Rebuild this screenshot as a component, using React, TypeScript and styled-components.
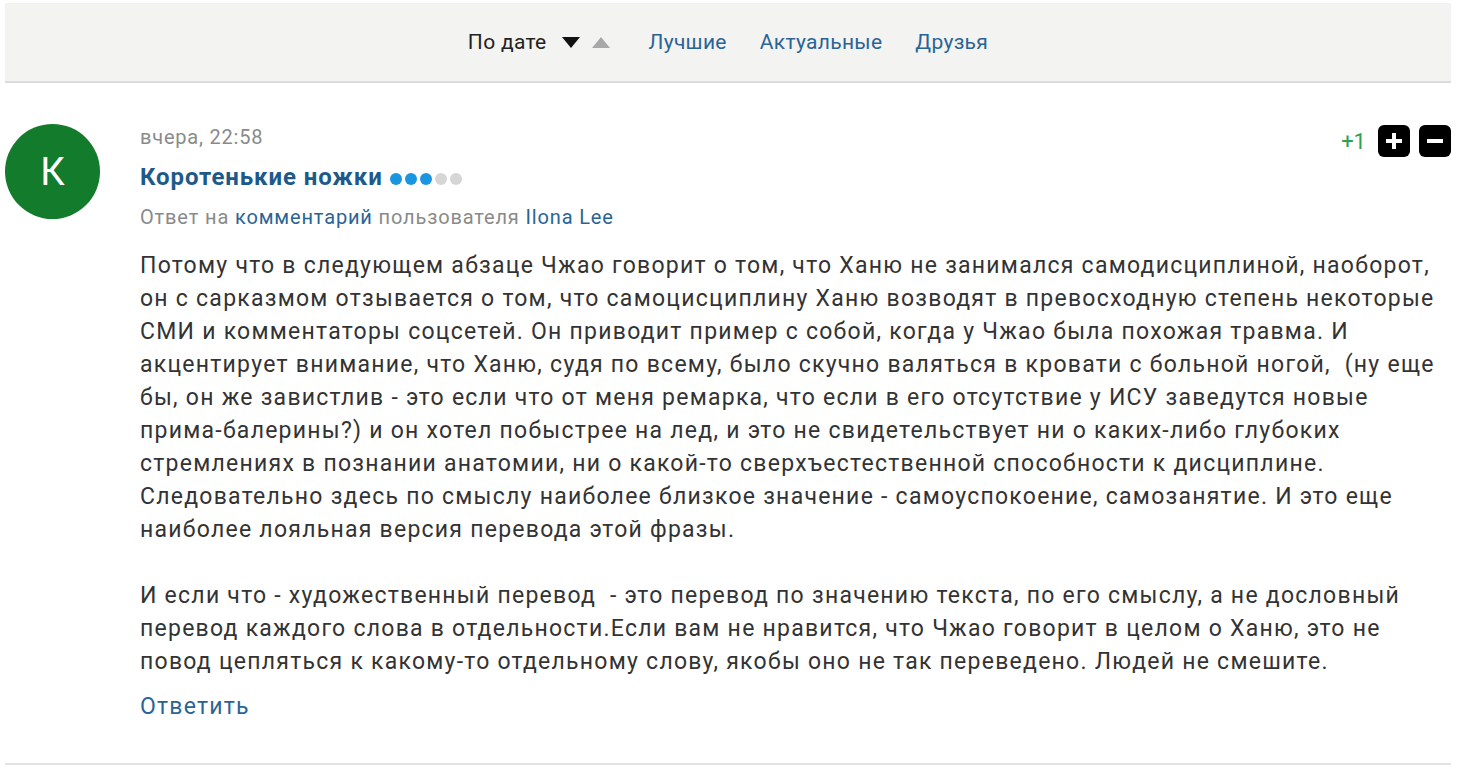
import React from "react";
import styled, { createGlobalStyle } from "styled-components";

const Global = createGlobalStyle`
  html, body { margin: 0; padding: 0; background: #fff; }
  body { font-family: Roboto, "Noto Sans", sans-serif; color: #333; }
`;

const Page = styled.div`
  width: 1446px;
  margin-left: 5px;
  padding-top: 3px;
`;

const SortBar = styled.div`
  height: 78px;
  background: #f3f3f1;
  border-bottom: 2px solid #dcdcdc;
  display: flex;
  align-items: center;
  justify-content: center;
  gap: 33px;
  font-size: 21px;
  letter-spacing: 0.3px;
`;

const SortActive = styled.span`
  color: #222;
  display: flex;
  align-items: center;
  gap: 16px;
  margin-right: 5px;
`;

const Arrows = styled.span`
  display: flex;
  gap: 12px;
  align-items: center;
`;

const Tri = styled.span<{ $up?: boolean }>`
  width: 0;
  height: 0;
  border-left: 9px solid transparent;
  border-right: 9px solid transparent;
  ${(p) =>
    p.$up
      ? "border-bottom: 11px solid #a8a8a8;"
      : "border-top: 11px solid #111;"}
`;

const SortLink = styled.a`
  color: #2a6496;
  text-decoration: none;
`;

const Comment = styled.div`
  display: flex;
  gap: 40px;
  padding-top: 41px;
  padding-bottom: 40px;
  border-bottom: 2px solid #e2e2e2;
`;

const Avatar = styled.div`
  width: 95px;
  height: 95px;
  flex: none;
  border-radius: 50%;
  background: #137b2c;
  color: #fff;
  display: flex;
  align-items: center;
  justify-content: center;
  font-size: 38px;
`;

const Main = styled.div`
  flex: 1;
  display: flex;
  flex-direction: column;
`;

const TopRow = styled.div`
  display: flex;
  justify-content: space-between;
  align-items: flex-start;
`;

const Date = styled.div`
  color: #8a8a8a;
  font-size: 20px;
  letter-spacing: 0.8px;
  line-height: 24px;
  margin-top: 1px;
`;

const Name = styled.div`
  display: flex;
  align-items: center;
  gap: 7px;
  margin-top: 14px;
  font-size: 24px;
  letter-spacing: 0.9px;
  line-height: 28px;
  font-weight: 700;
  color: #1d5a8a;
`;

const Dots = styled.span`
  display: flex;
  gap: 3px;
  margin-top: 3px;
`;

const Dot = styled.span<{ $on?: boolean }>`
  width: 12px;
  height: 12px;
  border-radius: 50%;
  background: ${(p) => (p.$on ? "#1a96e0" : "#d6d6d6")};
`;

const ReplyTo = styled.div`
  margin-top: 14px;
  font-size: 20px;
  letter-spacing: 0.85px;
  line-height: 24px;
  color: #8a8a8a;
`;

const UserLink = styled.a`
  color: #2a6496;
  text-decoration: none;
`;

const Votes = styled.div`
  display: flex;
  align-items: center;
  gap: 9px;
  margin-top: 1px;
`;

const Score = styled.span`
  color: #2aa34a;
  font-size: 22px;
  margin-right: 3px;
`;

const VoteBtn = styled.button`
  width: 32px;
  height: 32px;
  padding: 0;
  border: none;
  border-radius: 6px;
  background: #000;
  display: flex;
  align-items: center;
  justify-content: center;
`;

const Body = styled.div`
  margin-top: 20px;
  font-size: 23px;
  letter-spacing: 1.25px;
  line-height: 33px;
  color: #333;
  white-space: nowrap;
`;

const Para = styled.p`
  margin: 0 0 33px;
  &:last-child { margin-bottom: 0; }
`;

const Answer = styled.a`
  display: block;
  margin-top: 12px;
  font-size: 23px;
  letter-spacing: 1.2px;
  line-height: 33px;
  color: #2a6496;
  text-decoration: none;
`;

const Plus = () => (
  <svg width="20" height="20" viewBox="0 0 20 20">
    <path d="M10 2v16M2 10h16" stroke="#fff" strokeWidth="4" />
  </svg>
);
const Minus = () => (
  <svg width="20" height="20" viewBox="0 0 20 20">
    <path d="M2 10h16" stroke="#fff" strokeWidth="4" />
  </svg>
);

export default function App() {
  return (
    <>
      <Global />
      <Page>
        <SortBar>
          <SortActive>
            По дате
            <Arrows>
              <Tri />
              <Tri $up />
            </Arrows>
          </SortActive>
          <SortLink>Лучшие</SortLink>
          <SortLink>Актуальные</SortLink>
          <SortLink>Друзья</SortLink>
        </SortBar>
        <Comment>
          <Avatar>К</Avatar>
          <Main>
            <TopRow>
              <div>
                <Date>вчера, 22:58</Date>
                <Name>
                  Коротенькие ножки
                  <Dots>
                    <Dot $on />
                    <Dot $on />
                    <Dot $on />
                    <Dot />
                    <Dot />
                  </Dots>
                </Name>
                <ReplyTo>
                  Ответ на <UserLink>комментарий</UserLink> пользователя{" "}
                  <UserLink>Ilona Lee</UserLink>
                </ReplyTo>
              </div>
              <Votes>
                <Score>+1</Score>
                <VoteBtn><Plus /></VoteBtn>
                <VoteBtn><Minus /></VoteBtn>
              </Votes>
            </TopRow>
            <Body>
              <Para>
                Потому что в следующем абзаце Чжао говорит о том, что Ханю не занимался самодисциплиной, наоборот,<br />
                он с сарказмом отзывается о том, что самоцисциплину Ханю возводят в превосходную степень некоторые<br />
                СМИ и комментаторы соцсетей. Он приводит пример с собой, когда у Чжао была похожая травма. И<br />
                акцентирует внимание, что Ханю, судя по всему, было скучно валяться в кровати с больной ногой,&nbsp; (ну еще<br />
                бы, он же завистлив - это если что от меня ремарка, что если в его отсутствие у ИСУ заведутся новые<br />
                прима-балерины?) и он хотел побыстрее на лед, и это не свидетельствует ни о каких-либо глубоких<br />
                стремлениях в познании анатомии, ни о какой-то сверхъестественной способности к дисциплине.<br />
                Следовательно здесь по смыслу наиболее близкое значение - самоуспокоение, самозанятие. И это еще<br />
                наиболее лояльная версия перевода этой фразы.
              </Para>
              <Para>
                И если что - художественный перевод&nbsp; - это перевод по значению текста, по его смыслу, а не дословный<br />
                перевод каждого слова в отдельности.Если вам не нравится, что Чжао говорит в целом о Ханю, это не<br />
                повод цепляться к какому-то отдельному слову, якобы оно не так переведено. Людей не смешите.
              </Para>
            </Body>
            <Answer>Ответить</Answer>
          </Main>
        </Comment>
      </Page>
    </>
  );
}
